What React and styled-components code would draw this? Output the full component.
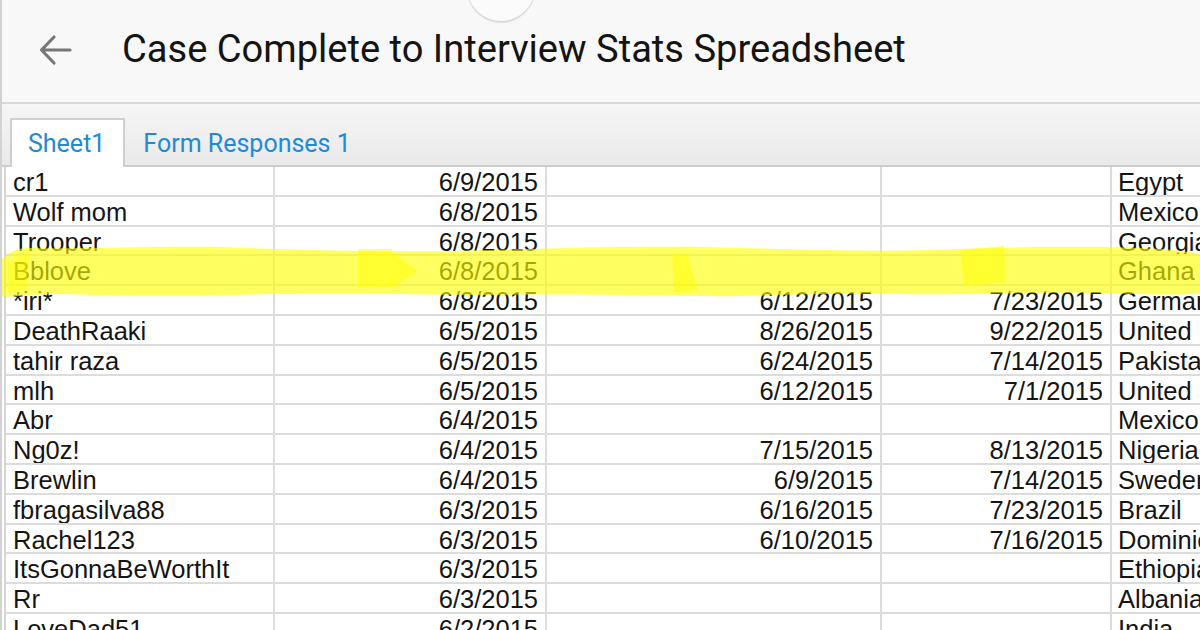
import React from "react";
import styled, { createGlobalStyle } from "styled-components";

const Global = createGlobalStyle`
  html, body { margin: 0; padding: 0; background: #ffffff; }
  body { overflow: hidden; }
  #root { width: 1200px; height: 630px; }
`;

const Page = styled.div`
  position: relative;
  width: 1200px;
  height: 630px;
  overflow: hidden;
  box-sizing: border-box;
  border-left: 2px solid #d2d2d2;
  background: #ffffff;
  display: flex;
  flex-direction: column;
`;

const Header = styled.header`
  height: 104px;
  flex: none;
  box-sizing: border-box;
  background: #f8f8f8;
  border-bottom: 2px solid #d8d8d8;
  display: flex;
  align-items: center;
  padding-left: 34px;
`;

const BackButton = styled.div`
  width: 38px;
  height: 38px;
  display: flex;
  align-items: center;
  justify-content: center;
  margin-right: 48px;
  margin-top: -2px;
`;

const Title = styled.h1`
  margin: 0;
  font-family: Roboto, "Noto Sans", sans-serif;
  font-weight: 400;
  font-size: 38.1px;
  color: #141414;
  margin-top: -4px;
`;

const Bubble = styled.div`
  position: absolute;
  left: 465px;
  top: -47px;
  width: 68px;
  height: 68px;
  border-radius: 50%;
  background: #fbfbfb;
  box-shadow: 0 2px 1px rgba(0, 0, 0, 0.1), 0 0 0 1px rgba(0, 0, 0, 0.04);
`;

const TabBar = styled.nav`
  height: 63px;
  flex: none;
  box-sizing: border-box;
  background: linear-gradient(#f6f6f6, #e9e9e9);
  border-bottom: 2px solid #cdcdcd;
  display: flex;
  align-items: flex-end;
  padding-left: 8px;
`;

const Tab = styled.div`
  height: 49px;
  box-sizing: border-box;
  padding: 0 ${(p) => (p.$active ? "18px" : "16px")} 0 16px;
  display: flex;
  align-items: center;
  font-family: Roboto, "Noto Sans", sans-serif;
  font-size: 25px;
  color: #1f8ad6;
  margin-bottom: -2px;
  background: ${(p) => (p.$active ? "#ffffff" : "transparent")};
  border: 2px solid ${(p) => (p.$active ? "#cfcfcf" : "transparent")};
  border-bottom: none;
`;

const Grid = styled.div`
  position: relative;
  flex: 1;
  margin-left: 2px;
  border-left: 2px solid #d6d6d6;
`;

const Row = styled.div`
  display: grid;
  grid-template-columns: 269px 272px 335px 230px 1fr;
  height: 29.8px;
  box-sizing: border-box;
  border-bottom: 2px solid #dcdcdc;
`;

const Cell = styled.div`
  box-sizing: border-box;
  border-right: 2px solid #dcdcdc;
  padding: 1px ${(p) => (p.$right ? "7px" : "0")} 0 ${(p) => (p.$right ? "0" : "7px")};
  text-align: ${(p) => (p.$right ? "right" : "left")};
  font-family: "Liberation Sans", Arial, sans-serif;
  font-size: 25.5px;
  line-height: 28px;
  color: #151515;
  white-space: nowrap;
  overflow: hidden;
  &:last-child { border-right: none; padding-left: 6px; }
`;

const Highlight = styled.svg`
  position: absolute;
  left: -6px;
  top: 72px;
  width: 1200px;
  height: 72px;
  pointer-events: none;
`;

const rows = [
  ["cr1", "6/9/2015", "", "", "Egypt"],
  ["Wolf mom", "6/8/2015", "", "", "Mexico"],
  ["Trooper", "6/8/2015", "", "", "Georgia"],
  ["Bblove", "6/8/2015", "", "", "Ghana"],
  ["*iri*", "6/8/2015", "6/12/2015", "7/23/2015", "Germany"],
  ["DeathRaaki", "6/5/2015", "8/26/2015", "9/22/2015", "United Kingdom"],
  ["tahir raza", "6/5/2015", "6/24/2015", "7/14/2015", "Pakistan"],
  ["mlh", "6/5/2015", "6/12/2015", "7/1/2015", "United States"],
  ["Abr", "6/4/2015", "", "", "Mexico"],
  ["Ng0z!", "6/4/2015", "7/15/2015", "8/13/2015", "Nigeria"],
  ["Brewlin", "6/4/2015", "6/9/2015", "7/14/2015", "Sweden"],
  ["fbragasilva88", "6/3/2015", "6/16/2015", "7/23/2015", "Brazil"],
  ["Rachel123", "6/3/2015", "6/10/2015", "7/16/2015", "Dominican Republic"],
  ["ItsGonnaBeWorthIt", "6/3/2015", "", "", "Ethiopia"],
  ["Rr", "6/3/2015", "", "", "Albania"],
  ["LoveDad51", "6/2/2015", "", "", "India"],
];

export default function App() {
  return (
    <>
      <Global />
      <Page>
        <Bubble />
        <Header>
          <BackButton>
            <svg width="34" height="32" viewBox="0 0 34 32">
              <path
                d="M32 16 H4 M16 3 L3.5 16 L16 29"
                fill="none"
                stroke="#777777"
                strokeWidth="3.2"
                strokeLinecap="round"
                strokeLinejoin="round"
              />
            </svg>
          </BackButton>
          <Title>Case Complete to Interview Stats Spreadsheet</Title>
        </Header>
        <TabBar>
          <Tab $active>Sheet1</Tab>
          <Tab>Form Responses 1</Tab>
        </TabBar>
        <Grid>
          {rows.map((r, i) => (
            <Row key={i}>
              <Cell>{r[0]}</Cell>
              <Cell $right>{r[1]}</Cell>
              <Cell $right>{r[2]}</Cell>
              <Cell $right>{r[3]}</Cell>
              <Cell>{r[4]}</Cell>
            </Row>
          ))}
          <Highlight viewBox="0 0 1200 72">
            <g fill="#ffff00">
              <path
                opacity="0.62"
                d="M0 22 C10 11 20 9 30 9 C100 10 160 7 220 8 C300 11 380 13 450 12 C540 10 620 7 700 8 C790 10 860 13 930 11 C1000 8 1080 7 1140 9 C1170 10 1190 13 1200 15 L1200 54 C1180 57 1150 55 1100 54 C1030 53 960 56 900 55 C820 53 760 58 700 57 C620 56 540 55 470 56 C380 55 300 54 230 56 C160 58 100 56 60 55 C30 55 10 59 0 57 Z"
              />
              <path opacity="0.4" d="M8 24 L30 11 L26 50 L8 54 Z" />
              <path opacity="0.5" d="M358 10 L392 10 L392 13 L418 32 L394 48 L358 49 Z" />
              <path opacity="0.5" d="M672 15 L686 14 L698 51 L674 53 Z" />
              <path opacity="0.5" d="M960 11 L1004 7 L1006 43 L964 47 Z" />
            </g>
          </Highlight>
        </Grid>
      </Page>
    </>
  );
}
